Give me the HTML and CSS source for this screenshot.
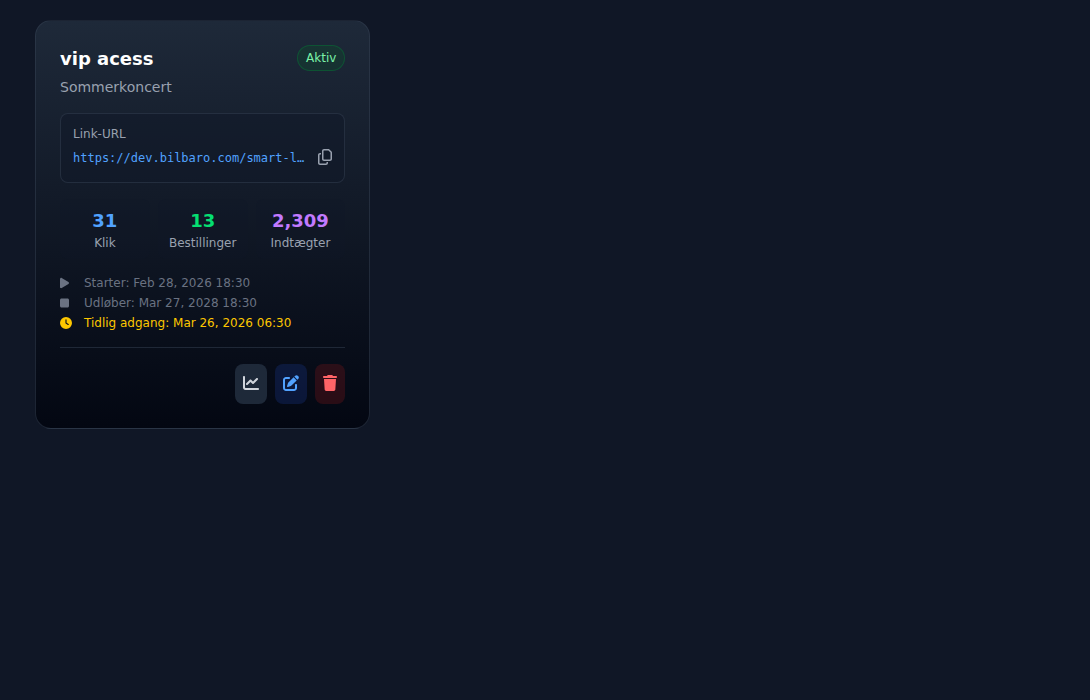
FILE: index.html
```html
<!DOCTYPE html>
<html lang="da">
  <head>
    <meta charset="utf-8">
    <title>Smart links</title>
    <link rel="stylesheet" href="styles.css">
  </head>
  <body>
    <main class="link-grid">
      <article class="card">
        <header class="card-header">
          <div>
            <h3 class="card-title">vip acess</h3>
            <p class="card-event">Sommerkoncert</p>
          </div>
          <span class="badge">Aktiv</span>
        </header>

        <div class="url-box">
          <p class="url-label">Link-URL</p>
          <div class="url-row">
            <code class="url">https://dev.bilbaro.com/smart-link/vip-acess</code>
            <button type="button" class="copy-btn" aria-label="Kopier">
              <svg class="icon" viewBox="0 0 448 512"><path d="M384 336H192c-8.800 0-16-7.200-16-16V64c0-8.800 7.200-16 16-16h140.100L400 115.900V320c0 8.800-7.200 16-16 16zM192 384H384c35.300 0 64-28.700 64-64V115.900c0-12.700-5.100-24.900-14.100-33.900L366.100 14.100c-9-9-21.200-14.100-33.900-14.100H192c-35.300 0-64 28.700-64 64V320c0 35.300 28.700 64 64 64zM64 128c-35.300 0-64 28.700-64 64V448c0 35.300 28.700 64 64 64H256c35.300 0 64-28.700 64-64V416H272v32c0 8.800-7.200 16-16 16H64c-8.800 0-16-7.200-16-16V192c0-8.800 7.200-16 16-16H96V128H64z"/></svg>
            </button>
          </div>
        </div>

        <div class="stats">
          <div class="stat">
            <div class="stat-value blue">31</div>
            <div class="stat-label">Klik</div>
          </div>
          <div class="stat">
            <div class="stat-value green">13</div>
            <div class="stat-label">Bestillinger</div>
          </div>
          <div class="stat">
            <div class="stat-value purple">2,309</div>
            <div class="stat-label">Indtægter</div>
          </div>
        </div>

        <ul class="dates">
          <li>
            <svg class="icon-sm" viewBox="0 0 384 512"><path d="M73 39c-14.800-9.100-33.400-9.400-48.500-.9S0 62.600 0 80V432c0 17.400 9.400 33.400 24.500 41.900s33.700 8.100 48.500-.9L361 297c14.300-8.700 23-24.200 23-41s-8.700-32.200-23-41L73 39z"/></svg>
            <span>Starter: Feb 28, 2026 18:30</span>
          </li>
          <li>
            <svg class="icon-sm" viewBox="0 0 384 512"><path d="M0 128C0 92.700 28.700 64 64 64H320c35.300 0 64 28.700 64 64V384c0 35.300-28.700 64-64 64H64c-35.300 0-64-28.700-64-64V128z"/></svg>
            <span>Udløber: Mar 27, 2028 18:30</span>
          </li>
          <li class="early">
            <svg class="icon-sm" viewBox="0 0 512 512"><path d="M256 0a256 256 0 1 1 0 512A256 256 0 1 1 256 0zM232 120V256c0 8 4 15.500 10.700 20l96 64c11 7.400 25.900 4.400 33.300-6.700s4.400-25.900-6.700-33.300L280 243.200V120c0-13.300-10.700-24-24-24s-24 10.700-24 24z"/></svg>
            <span>Tidlig adgang: Mar 26, 2026 06:30</span>
          </li>
        </ul>

        <footer class="actions">
          <button type="button" class="btn btn-stats" aria-label="Statistik">
            <svg class="icon" viewBox="0 0 512 512"><path d="M64 64c0-17.700-14.300-32-32-32S0 46.300 0 64V400c0 44.200 35.800 80 80 80H480c17.700 0 32-14.300 32-32s-14.300-32-32-32H80c-8.800 0-16-7.200-16-16V64zm406.600 86.600c12.500-12.500 12.500-32.800 0-45.300s-32.800-12.500-45.300 0L320 210.700l-57.400-57.400c-12.500-12.500-32.800-12.500-45.300 0l-112 112c-12.500 12.500-12.500 32.800 0 45.300s32.800 12.500 45.300 0L240 221.300l57.400 57.400c12.500 12.500 32.800 12.500 45.300 0l128-128z"/></svg>
          </button>
          <button type="button" class="btn btn-edit" aria-label="Rediger">
            <svg class="icon" viewBox="0 0 512 512"><path d="M471.600 21.700c-21.900-21.900-57.300-21.900-79.200 0L362.300 51.700l97.900 97.900 30.100-30.100c21.900-21.900 21.900-57.300 0-79.200L471.600 21.700zm-299.200 220c-6.100 6.100-10.800 13.600-13.500 21.900l-29.600 88.800c-2.900 8.600-.6 18.100 5.800 24.600s15.900 8.700 24.600 5.800l88.800-29.600c8.200-2.700 15.700-7.400 21.900-13.500L437.700 172.300 339.700 74.300 172.400 241.700zM96 64C43 64 0 107 0 160V416c0 53 43 96 96 96H352c53 0 96-43 96-96V320c0-17.700-14.300-32-32-32s-32 14.300-32 32v96c0 17.700-14.300 32-32 32H96c-17.700 0-32-14.300-32-32V160c0-17.700 14.300-32 32-32h96c17.700 0 32-14.300 32-32s-14.300-32-32-32H96z"/></svg>
          </button>
          <button type="button" class="btn btn-delete" aria-label="Slet">
            <svg class="icon" viewBox="0 0 448 512"><path d="M135.200 17.700L128 32H32C14.300 32 0 46.300 0 64S14.300 96 32 96H416c17.700 0 32-14.300 32-32s-14.300-32-32-32H320l-7.200-14.300C307.400 6.800 296.300 0 284.200 0H163.800c-12.100 0-23.200 6.800-28.600 17.700zM416 128H32L53.200 467c1.600 25.300 22.600 45 47.900 45H346.900c25.300 0 46.300-19.700 47.900-45L416 128z"/></svg>
          </button>
        </footer>
      </article>
    </main>
  </body>
</html>
```
FILE: styles.css
```css
* {
  box-sizing: border-box;
}
body {
  margin: 0;
  background-color: #101726;
  color: #fff;
  font-family: "DejaVu Sans", sans-serif;
  font-size: 16px;
  line-height: 24px;
}
h3, p, ul {
  margin: 0;
  padding: 0;
}
button {
  border: none;
  background: none;
  font: inherit;
  cursor: pointer;
}
.link-grid {
  display: grid;
  grid-template-columns: repeat(3, 1fr);
  align-items: start;
  gap: 7px;
  padding: 20px 35px;
}
.card {
  min-width: 0;
  padding: 24px;
  border: 1px solid rgba(54, 65, 83, 0.5);
  border-radius: 16px;
  background-image: linear-gradient(to bottom, #1e2939, #030712);
}
.card-header {
  display: flex;
  justify-content: space-between;
  align-items: flex-start;
  margin-bottom: 16px;
}
.card-title {
  margin-bottom: 4px;
  font-size: 18px;
  line-height: 28px;
}
.card-event {
  color: #99a1af;
  font-size: 14px;
  line-height: 20px;
}
.badge {
  padding: 4px 8px;
  border: 1px solid rgba(0, 130, 54, 0.4);
  border-radius: 13px;
  background-color: rgba(13, 84, 43, 0.3);
  color: #7bf1a8;
  font-size: 12px;
  line-height: 16px;
}
.url-box {
  margin-bottom: 16px;
  padding: 12px;
  border: 1px solid rgba(54, 65, 83, 0.5);
  border-radius: 8px;
  background-color: rgba(16, 24, 40, 0.5);
}
.url-label {
  margin-bottom: 4px;
  color: #99a1af;
  font-size: 12px;
  line-height: 16px;
}
.url-row {
  display: flex;
  align-items: center;
  gap: 8px;
}
.url {
  flex: 1;
  min-width: 0;
  overflow: hidden;
  text-overflow: ellipsis;
  white-space: nowrap;
  color: #51a2ff;
  font-family: "DejaVu Sans Mono", monospace;
  font-size: 12px;
  line-height: 16px;
}
.icon {
  display: block;
  height: 16px;
  fill: currentColor;
}
.copy-btn {
  display: flex;
  align-items: center;
  height: 24px;
  padding: 0 0 2px;
  color: #99a1af;
}
.stats {
  display: grid;
  grid-template-columns: repeat(3, 1fr);
  gap: 8px;
  margin-bottom: 16px;
}
.stat {
  padding: 8px 0;
  border-radius: 8px;
  background-color: rgba(16, 24, 40, 0.3);
  text-align: center;
}
.stat-value {
  font-size: 18px;
  font-weight: bold;
  line-height: 28px;
}
.stat-label {
  color: #99a1af;
  font-size: 12px;
  line-height: 16px;
}
.blue {
  color: #51a2ff;
}
.green {
  color: #05df72;
}
.purple {
  color: #c27aff;
}
.dates {
  display: grid;
  gap: 4px;
  margin-bottom: 16px;
  color: #6a7282;
  font-size: 12px;
  line-height: 16px;
  list-style: none;
}
.dates li {
  display: grid;
  grid-template-columns: 16px 1fr;
  align-items: center;
  gap: 8px;
}
.dates .early {
  color: #fdc700;
}
.icon-sm {
  height: 12px;
  fill: currentColor;
}
.actions {
  display: flex;
  justify-content: flex-end;
  gap: 8px;
  padding-top: 16px;
  border-top: 1px solid rgba(54, 65, 83, 0.5);
}
.btn {
  display: flex;
  align-items: center;
  height: 40px;
  padding: 0 8px 2px;
  border-radius: 8px;
}
.btn-stats {
  background-color: #1e2939;
  color: #d1d5dc;
}
.btn-edit {
  background-color: rgba(28, 57, 142, 0.3);
  color: #51a2ff;
}
.btn-delete {
  background-color: rgba(130, 24, 26, 0.3);
  color: #ff6467;
}
```
